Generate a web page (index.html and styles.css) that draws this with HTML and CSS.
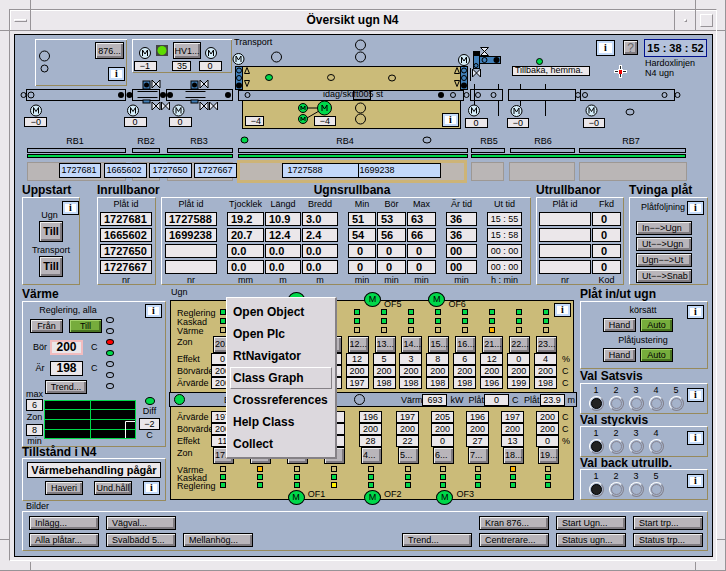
FILE: index.html
```html
<!DOCTYPE html>
<html lang="sv">
<head>
<meta charset="utf-8">
<title>Översikt ugn N4</title>
<link rel="stylesheet" href="styles.css">
</head>
<body>
<div class="window">
<header class="titlebar">
  <button class="frame-btn" aria-label="Fönstermeny"><span class="mark-dash"></span></button>
  <h1>Översikt ugn N4</h1>
  <button class="frame-btn" aria-label="Minimera"><span class="mark-dot"></span></button>
  <button class="frame-btn" aria-label="Maximera"><span class="mark-box"></span></button>
</header>
<main class="screen">

<svg class="mimic" viewBox="15 35 697 148" role="group" aria-label="Transport">
  <defs>
    <g id="motor"><circle r="5.5" class="motor"/><path d="M-2.5 3V-3L0 1L2.5-3V3" class="ln"/></g>
    <g id="valve"><path d="M-4-4L4 4V-4L-4 4Z" class="valve"/></g>
    <g id="stack"><rect width="7" height="23" class="blue"/><circle cx="3.5" cy="4" r="2.5" class="ln"/><circle cx="3.5" cy="11.5" r="2.5" class="ln"/><circle cx="3.5" cy="19" r="3"/></g>
    <g id="gate"><rect x="-3.5" y="-8" width="7" height="8" class="blue"/><circle cy="-4" r="2.5"/><rect x="-3.5" y="11" width="7" height="3" class="blue"/><path d="M-9 2.5H11M-9 8.5H11" class="ln"/></g>
  </defs>
  <g shape-rendering="crispEdges" fill="none">
    <path d="M35.5 86V39.5H127" class="lit"/><path d="M36 85.5H126.5V40" class="dim"/>
    <path d="M132.5 72V39.5H232" class="lit"/><path d="M133 72.5H231.5V40" class="dim"/>
  </g>
  <circle cx="44.5" cy="56" r="5" class="ln"/><circle cx="44.5" cy="68.5" r="3.5" class="ln"/>
  <foreignObject x="95" y="42" width="29" height="17"><button class="btn fill">876...</button></foreignObject>
  <foreignObject x="108" y="67" width="17" height="14"><button class="info fill">i</button></foreignObject>
  <use href="#motor" x="145" y="53"/><use href="#motor" x="211" y="53"/>
  <rect x="156" y="45" width="12" height="11" fill="#444"/><circle cx="162" cy="50.5" r="4.5" fill="#5ddc00"/>
  <foreignObject x="173" y="42" width="28" height="17"><button class="btn fill">HV1...</button></foreignObject>

  <g class="track" shape-rendering="crispEdges">
    <rect x="26.5" y="89.5" width="99" height="11"/><rect x="132.5" y="89.5" width="27" height="11"/><rect x="166.5" y="89.5" width="66" height="11"/>
    <rect x="470.5" y="89.5" width="32" height="11"/><rect x="508.5" y="89.5" width="67" height="11"/><rect x="580.5" y="89.5" width="94" height="11"/>
  </g>
  <use href="#gate" x="146.5" y="89"/><use href="#gate" x="194.5" y="89"/>
  <use href="#valve" x="156" y="84"/><use href="#valve" x="156" y="106"/><use href="#valve" x="165.5" y="106"/>
  <use href="#valve" x="204" y="84"/><use href="#valve" x="204" y="106"/><use href="#valve" x="213.5" y="106"/>
  <circle cx="23.5" cy="95" r="2.5" class="ln"/><circle cx="31" cy="95" r="3" class="ln"/>
  <circle cx="121" cy="95" r="3"/><circle cx="129.5" cy="95" r="3"/><circle cx="163" cy="95" r="3"/><circle cx="170" cy="95" r="3"/><circle cx="228" cy="95" r="3"/>
  <use href="#motor" x="36" y="110.5"/><use href="#motor" x="133" y="110.5"/><use href="#motor" x="178.5" y="110.5"/>

  <text x="234" y="45">Transport</text>
  <circle cx="276.5" cy="57" r="5" class="ln"/><circle cx="360.5" cy="45" r="5" class="ln"/><circle cx="360.5" cy="57" r="5" class="ln"/>
  <g class="kiln" shape-rendering="crispEdges"><rect x="242.5" y="66.5" width="218" height="24"/><rect x="242.5" y="100.5" width="218" height="28"/></g>
  <rect x="238.5" y="90.5" width="225" height="10" class="bar" shape-rendering="crispEdges"/>
  <use href="#stack" x="235.5" y="66.5"/><use href="#stack" x="460.5" y="66.5"/>
  <use href="#motor" x="238.5" y="59"/><use href="#motor" x="464" y="60"/>
  <path d="M244.5 73.5H249.5L247 67.5ZM244.5 80.5H249.5L247 86.5ZM454.5 73.5H459.5L457 67.5ZM454.5 80.5H459.5L457 86.5Z" class="ln"/>
  <ellipse cx="269" cy="77.5" rx="3.5" ry="3" class="on"/><ellipse cx="331" cy="77.5" rx="3.5" ry="3" class="ln"/><ellipse cx="392" cy="78" rx="3.5" ry="3" class="ln"/>
  <rect x="353.5" y="90.5" width="17" height="9" fill="#8e98ae" stroke="#000"/>
  <text x="323" y="97">idag/skift005 st</text>
  <circle cx="247.5" cy="95" r="2.5" class="ln"/><circle cx="441" cy="95" r="3"/><circle cx="453" cy="95" r="2.5" class="ln"/><circle cx="466.5" cy="95" r="2.5" class="ln"/>
  <path d="M307 108H318M307 118L319 111" class="ln"/>
  <circle cx="303" cy="108" r="4.5" class="on"/><circle cx="303" cy="119" r="4.5" class="on"/><circle cx="324.5" cy="108" r="7" class="on"/>
  <path d="M301 110V106L303 109L305 106V110M301 121V117L303 120L305 117V121M322 111V105L324.5 109L327 105V111" class="ln"/>
  <circle cx="360.5" cy="108" r="5" class="ln"/><circle cx="360.5" cy="119" r="5" class="ln"/>
  <foreignObject x="442" y="113" width="17" height="14"><button class="info fill">i</button></foreignObject>

  <rect x="473.5" y="51.5" width="6" height="17" class="blue"/><rect x="479.5" y="56.5" width="21" height="7" class="blue"/><path d="M473 51H480V56H473Z"/>
  <circle cx="484.5" cy="60" r="2.5" class="ln"/><circle cx="496.5" cy="60" r="3"/><circle cx="476" cy="65.5" r="2" class="ln"/>
  <use href="#valve" transform="translate(484.5 51.5) rotate(90)"/><use href="#valve" x="476.5" y="73"/>
  <path d="M470.5 68V81M474.5 84V105M498.5 84V89M498.5 100V116M520.5 84V89M520.5 100V106M545.5 84V89M545.5 100V116" class="ln"/>
  <circle cx="478" cy="95" r="2.5" class="ln"/><circle cx="493.5" cy="95" r="2.5" class="ln"/><circle cx="578" cy="95" r="2.5" class="ln"/><circle cx="585" cy="95" r="2.5" class="ln"/><circle cx="664.5" cy="95" r="2.5" class="ln"/><circle cx="677.5" cy="95" r="2.5" class="ln"/>
  <use href="#motor" x="474" y="110.5"/><use href="#motor" x="516.5" y="111"/><use href="#motor" x="591.5" y="110.5"/>
  <ellipse cx="630" cy="112" rx="4" ry="3" class="ln"/>
  <circle cx="539.5" cy="61.5" r="3" class="on"/>

  <g class="field" shape-rendering="crispEdges">
    <rect x="134.5" y="61.5" width="22" height="9"/><rect x="172.5" y="61.5" width="18" height="9"/><rect x="199.5" y="61.5" width="22" height="9"/>
    <rect x="24.5" y="117.5" width="22" height="9"/><rect x="124.5" y="117.5" width="22" height="9"/><rect x="169.5" y="117.5" width="22" height="9"/>
    <rect x="245.5" y="116.5" width="18" height="9"/><rect x="314.5" y="116.5" width="21" height="9"/>
    <rect x="465.5" y="118.5" width="22" height="9"/><rect x="507.5" y="118.5" width="21" height="9"/><rect x="583.5" y="118.5" width="21" height="9"/>
    <rect x="512.5" y="66.5" width="77" height="9"/>
  </g>
  <g class="mid">
    <text x="145" y="69">−1</text><text x="182" y="69">35</text><text x="210" y="69">0</text>
    <text x="36" y="125">−0</text><text x="135" y="125">0</text><text x="180" y="125">0</text>
    <text x="256" y="124">−4</text><text x="325" y="124">−4</text>
    <text x="476" y="126">0</text><text x="518" y="126">−0</text><text x="594" y="126">−0</text>
    <text x="75" y="144">RB1</text><text x="146" y="144">RB2</text><text x="199" y="144">RB3</text><text x="345" y="144">RB4</text>
    <text x="489" y="144">RB5</text><text x="543" y="144">RB6</text><text x="631" y="144">RB7</text>
    <text x="549" y="73">Tillbaka, hemma.</text>
  </g>

  <foreignObject x="596" y="40" width="19" height="16"><button class="info fill">i</button></foreignObject>
  <foreignObject x="623" y="40" width="15" height="15"><button class="btn fill help">?</button></foreignObject>
  <rect x="644.5" y="39.5" width="62" height="17" fill="#b4c2dc" stroke="#00108c"/>
  <text x="675.5" y="52" class="clock">15 : 38 : 52</text>
  <text x="645" y="66">Hardoxlinjen</text><text x="645" y="76">N4 ugn</text>
  <path d="M620.5 65V78M614 71.5H627" stroke="#fff" stroke-width="3"/><path d="M620.5 66V77M615 71.5H626" stroke="#222"/><rect x="618" y="69" width="5" height="5" fill="#fff"/><rect x="619" y="70" width="3" height="4" fill="#e00"/>

  <ellipse cx="244.5" cy="140" rx="3.5" ry="3" class="on"/><ellipse cx="427" cy="140" rx="4" ry="3" class="ln"/>
  <g class="bar" shape-rendering="crispEdges">
    <rect x="27.5" y="148.5" width="98" height="4"/><rect x="132.5" y="148.5" width="27" height="4"/><rect x="167.5" y="148.5" width="65" height="4"/><rect x="238.5" y="148.5" width="229" height="4"/><rect x="471.5" y="148.5" width="33" height="4"/><rect x="510.5" y="148.5" width="64" height="4"/><rect x="579.5" y="148.5" width="106" height="4"/>
  </g>
  <g class="on" shape-rendering="crispEdges"><rect x="27.5" y="154.5" width="205" height="3"/><rect x="238.5" y="154.5" width="229" height="3"/><rect x="471.5" y="154.5" width="214" height="3"/></g>
  <g class="slot" shape-rendering="crispEdges">
    <rect x="27.5" y="162.5" width="98" height="18"/><rect x="132.5" y="162.5" width="27" height="18"/><rect x="167.5" y="162.5" width="65" height="18"/>
    <rect x="471.5" y="162.5" width="32" height="18"/><rect x="509.5" y="162.5" width="65" height="18"/><rect x="579.5" y="162.5" width="107" height="18"/>
    <rect x="238" y="161" width="227" height="20" class="slot-hot"/>
  </g>
  <g class="plate" shape-rendering="crispEdges"><rect x="59.5" y="163.5" width="41" height="14"/><rect x="104.5" y="163.5" width="42" height="14"/><rect x="149.5" y="163.5" width="42" height="14"/><rect x="194.5" y="163.5" width="42" height="14"/><rect x="282.5" y="163.5" width="76" height="14"/><rect x="358.5" y="163.5" width="82" height="14"/></g>
  <g class="mid"><text x="79" y="173">1727681</text><text x="124" y="173">1665602</text><text x="170" y="173">1727650</text><text x="215" y="173">1727667</text><text x="305" y="173">1727588</text><text x="377" y="173">1699238</text></g>
</svg>

<div class="plates">
  <section class="block"><h2>Uppstart</h2>
    <div class="panel start">
      <button class="info">i</button>
      <span>Ugn</span><button class="btn till">Till</button>
      <span>Transport</span><button class="btn till">Till</button>
    </div>
  </section>
  <section class="block"><h2>Inrullbanor</h2>
    <div class="panel"><table>
      <thead><tr><th>Plåt id</th></tr></thead>
      <tbody><tr><td><b>1727681</b></td></tr><tr><td><b>1665602</b></td></tr><tr><td><b>1727650</b></td></tr><tr><td><b>1727667</b></td></tr></tbody>
      <tfoot><tr><td>nr</td></tr></tfoot>
    </table></div>
  </section>
  <section class="block"><h2 class="center">Ugnsrullbana</h2>
    <div class="panel wide"><table>
      <colgroup><col class="c53"><col class="c47"><col class="c37"><col class="c37"><col class="c38"><col class="c30"><col class="c30"><col class="c41"><col class="c45"></colgroup>
      <thead><tr><th>Plåt id</th><th class="gap">Tjocklek</th><th>Längd</th><th>Bredd</th><th class="gap">Min</th><th>Bör</th><th>Max</th><th class="gap">Är tid</th><th class="gap">Ut tid</th></tr></thead>
      <tbody>
      <tr><td><b>1727588</b></td><td class="gap"><b>19.2</b></td><td><b>10.9</b></td><td><b>3.0</b></td><td class="gap"><b>51</b></td><td><b>53</b></td><td><b>63</b></td><td class="gap"><b>36</b></td><td class="gap"><b class="time">15 : 55</b></td></tr>
      <tr><td><b>1699238</b></td><td class="gap"><b>20.7</b></td><td><b>12.4</b></td><td><b>2.4</b></td><td class="gap"><b>54</b></td><td><b>56</b></td><td><b>66</b></td><td class="gap"><b>36</b></td><td class="gap"><b class="time">15 : 58</b></td></tr>
      <tr><td><b></b></td><td class="gap"><b>0.0</b></td><td><b>0.0</b></td><td><b>0.0</b></td><td class="gap"><b class="one">0</b></td><td><b class="one">0</b></td><td><b class="one">0</b></td><td class="gap"><b>00</b></td><td class="gap"><b class="time">00 : 00</b></td></tr>
      <tr><td><b></b></td><td class="gap"><b>0.0</b></td><td><b>0.0</b></td><td><b>0.0</b></td><td class="gap"><b class="one">0</b></td><td><b class="one">0</b></td><td><b class="one">0</b></td><td class="gap"><b>00</b></td><td class="gap"><b class="time">00 : 00</b></td></tr>
      </tbody>
      <tfoot><tr><td>nr</td><td class="gap">mm</td><td>m</td><td>m</td><td class="gap">min</td><td>min</td><td>min</td><td class="gap">min</td><td class="gap">h : min</td></tr></tfoot>
    </table></div>
  </section>
  <section class="block"><h2>Utrullbanor</h2>
    <div class="panel"><table>
      <colgroup><col class="c53"><col class="c30"></colgroup>
      <thead><tr><th>Plåt id</th><th>Fkd</th></tr></thead>
      <tbody><tr><td><b></b></td><td><b class="one">0</b></td></tr><tr><td><b></b></td><td><b class="one">0</b></td></tr><tr><td><b></b></td><td><b class="one">0</b></td></tr><tr><td><b></b></td><td><b class="one">0</b></td></tr></tbody>
      <tfoot><tr><td>nr</td><td>Kod</td></tr></tfoot>
    </table></div>
  </section>
  <section class="block"><h2>Tvinga plåt</h2>
    <div class="panel force">
      <div class="force-head"><span>Plåtföljning</span><button class="info">i</button></div>
      <button class="btn">In−−&gt;Ugn</button><button class="btn">Ut−−&gt;Ugn</button><button class="btn">Ugn−−&gt;Ut</button><button class="btn">Ut−−&gt;Snab</button>
    </div>
  </section>
</div>

<div class="middle">
  <div class="col">
    <h2>Värme</h2>
    <section class="panel heat">
      <div class="heat-top">
        <div class="heat-set">
          <span class="line">Reglering, alla</span>
          <div class="pair"><button class="btn">Från</button><button class="btn green">Till</button></div>
          <div class="setrow"><label for="bor">Bör</label><input id="bor" class="big hot" value="200"><span>C</span></div>
          <div class="setrow"><label for="ar">Är</label><input id="ar" class="big" value="198" readonly><span>C</span></div>
          <button class="btn trend">Trend...</button>
        </div>
        <div class="lamps"><i class="lamp"></i><i class="lamp"></i><i class="lamp red"></i><i class="lamp green"></i><i class="lamp"></i><i class="lamp"></i><i class="lamp"></i></div>
        <button class="info">i</button>
      </div>
      <div class="heat-graph">
        <div class="zones"><label for="zmax">max</label><input id="zmax" value="6"><span>Zon</span><input id="zmin" value="8"><label for="zmin">min</label></div>
        <svg class="graph" viewBox="0 0 92 39" preserveAspectRatio="none"><rect width="92" height="39"/><path d="M0 .5H92M0 9.5H92M0 19.5H92M0 29.5H92M0 38.5H92M.5 0V39M46.5 0V39M91.5 0V39" stroke="#00d84a"/><path d="M81.5 38V21.5H91" stroke="#fff" fill="none"/></svg>
        <div class="diff"><i class="lamp wide-lamp green"></i><label for="diff">Diff</label><input id="diff" value="−2" readonly><span>C</span></div>
      </div>
    </section>
    <h2 class="low">Tillstånd i N4</h2>
    <section class="panel state">
      <output class="status">Värmebehandling pågår</output>
      <div class="state-row"><button class="btn">Haveri</button><button class="btn">Und.håll</button><button class="info">i</button></div>
    </section>
  </div>

  <section class="furnace">
    <span class="furnace-name">Ugn</span>
    <div class="tan">
      <button class="info">i</button>
      <div class="fans top"><span class="fan f1"></span><span class="fan f2">M</span><em class="o2">OF5</em><span class="fan f3">M</span><em class="o3">OF6</em></div>
      <div class="zonegrid" id="upper">
        <div class="names"><span class="r-led">Reglering</span><span class="r-led">Kaskad</span><span class="r-led">Värme</span><span class="r-btn">Zon</span><span class="r-val">Effekt</span><span class="r-val">Börvärde</span><span class="r-val">Ärvärde</span></div>
        <div class="zones-row"></div>
        <div class="units"><span class="r-val">%</span><span class="r-val">C</span><span class="r-val">C</span></div>
      </div>
      <div class="midbar">
        <i class="dot green"></i><span class="m-b">B</span><i class="dot m-dot"></i>
        <label for="eff">Värm</label><input id="eff" value="693" readonly><span class="m-kw">kW</span>
        <label for="pt">Plåt</label><input id="pt" value="0" readonly><span class="m-c">C</span>
        <label for="pp">Plåt</label><input id="pp" value="23.9" readonly><span>m</span>
      </div>
      <div class="zonegrid" id="lower">
        <div class="names"><span class="r-val">Ärvärde</span><span class="r-val">Börvärde</span><span class="r-val">Effekt</span><span class="r-btn">Zon</span><span class="r-led">Värme</span><span class="r-led">Kaskad</span><span class="r-led">Reglering</span></div>
        <div class="zones-row"></div>
        <div class="units"><span class="r-val">C</span><span class="r-val">C</span><span class="r-val">%</span></div>
      </div>
      <div class="fans bottom"><span class="fan f1">M</span><em class="o1">OF1</em><span class="fan f2">M</span><em class="o2">OF2</em><span class="fan f3">M</span><em class="o3">OF3</em></div>
    </div>
    <div class="menu" role="menu">
      <button role="menuitem">Open Object</button><button role="menuitem">Open Plc</button><button role="menuitem">RtNavigator</button><button role="menuitem" class="active">Class Graph</button><button role="menuitem">Crossreferences</button><button role="menuitem">Help Class</button><button role="menuitem">Collect</button>
    </div>
  </section>

  <div class="col">
    <h2>Plåt in/ut ugn</h2>
    <section class="panel modes">
      <div class="modes-list">
        <span>körsätt</span><div class="pair"><button class="btn">Hand</button><button class="btn green">Auto</button></div>
        <span>Plåtjustering</span><div class="pair"><button class="btn">Hand</button><button class="btn green">Auto</button></div>
      </div>
      <button class="info">i</button>
    </section>
    <h2>Val Satsvis</h2>
    <section class="panel choice">
      <label>1<input type="radio" name="sats" checked></label><label>2<input type="radio" name="sats"></label><label>3<input type="radio" name="sats"></label><label>4<input type="radio" name="sats"></label><label>5<input type="radio" name="sats"></label>
      <button class="info">i</button>
    </section>
    <h2 class="tight">Val styckvis</h2>
    <section class="panel choice">
      <label>1<input type="radio" name="styck" checked></label><label>2<input type="radio" name="styck"></label><label>3<input type="radio" name="styck"></label><label>4<input type="radio" name="styck"></label>
      <button class="info">i</button>
    </section>
    <h2 class="tight">Val back utrullb.</h2>
    <section class="panel choice">
      <label>1<input type="radio" name="back" checked></label><label>2<input type="radio" name="back"></label><label>3<input type="radio" name="back"></label><label>5<input type="radio" name="back"></label>
      <button class="info">i</button>
    </section>
  </div>
</div>

<nav class="pictures">
  <span class="pictures-name">Bilder</span>
  <div class="panel picture-grid">
    <button class="btn">Inlägg...</button><button class="btn">Vägval...</button><button class="btn g-kran">Kran 876...</button><button class="btn">Start Ugn...</button><button class="btn">Start trp...</button>
    <button class="btn g-first">Alla plåtar...</button><button class="btn">Svalbädd 5...</button><button class="btn">Mellanhög...</button><button class="btn g-trend">Trend...</button><button class="btn">Centrerare...</button><button class="btn">Status ugn...</button><button class="btn">Status trp...</button>
  </div>
</nav>
</main>
</div>
<script src="zones.js"></script>
</body>
</html>
```
FILE: zones.js
```js
// Each zone: button text, effect, set value, actual value, lamps (g green, o orange, y yellow, - off)
const upper = [
  ["20...", 0, 200, 200, "gg-"], ["", "", "", "", "gg-"], ["", "", "", "", "gg-"], ["", "", "", "", "gg-"],
  ["", "", "", "", "gg-"], ["12...", 12, 200, 197, "gg-"], ["13...", 5, 200, 198, "gg-"], ["14...", 3, 200, 198, "gg-"],
  ["15...", 8, 200, 198, "gg-"], ["16...", 6, 200, 198, "gg-"], ["21...", 12, 200, 196, "ggo"], ["22...", 0, 200, 199, "gg-"], ["23...", 4, 200, 198, "gg-"]
];
const lower = [
  ["17...", 11, 200, 197, "-gg"], ["", "", "", "", "ogg"], ["", "", "", "", "-gg"], ["", "", "", "", "-gy"], ["4...", 28, 200, 196, "-gg"],
  ["5...", 22, 200, 197, "-gg"], ["6...", 0, 200, 205, "-gg"], ["7...", 27, 200, 196, "-gg"], ["18...", 13, 200, 197, "ogg"], ["19...", 0, 200, 200, "-gg"]
];
const names = { g: "green", o: "orange", y: "yellow", "-": "off" };
const leds = s => [...s].map(c => `<span class="r-led"><i class="led ${names[c]}"></i></span>`).join("");
const val = v => `<output class="r-val val">${v}</output>`;
const btn = t => `<button class="btn r-btn">${t}</button>`;

document.querySelector("#upper .zones-row").innerHTML = upper
  .map(([n, e, b, a, l]) => `<div class="zone">${leds(l)}${btn(n)}${val(e)}${val(b)}${val(a)}</div>`).join("");
document.querySelector("#lower .zones-row").innerHTML = lower
  .map(([n, e, b, a, l]) => `<div class="zone">${val(a)}${val(b)}${val(e)}${btn(n)}${leds(l)}</div>`).join("");
```
FILE: styles.css
```css
:root {
  --bg: #a5b3cb;
  --tan: #cbbb79;
  --paper: #ebe7ea;
  --green: #00d84a;
  --grey: #b9b5ba;
  --edge: #979397;
}
* { box-sizing: border-box; }
body {
  margin: 0;
  padding: 9px;
  padding-bottom: 10px;
  font: 9px/10px "Liberation Sans", sans-serif;
  color: #000;
  background:
    linear-gradient(var(--edge), var(--edge)) 30px 0 / 1px 9px no-repeat,
    linear-gradient(var(--edge), var(--edge)) 0 30px / 9px 1px no-repeat,
    linear-gradient(var(--edge), var(--edge)) 0 539px / 9px 1px no-repeat,
    linear-gradient(var(--edge), var(--edge)) 30px 100% / 1px 9px no-repeat,
    linear-gradient(var(--edge), var(--edge)) calc(100% - 30px) 0 / 1px 9px no-repeat,
    linear-gradient(var(--edge), var(--edge)) calc(100% - 30px) 100% / 1px 9px no-repeat,
    linear-gradient(var(--edge), var(--edge)) 100% 30px / 9px 1px no-repeat,
    linear-gradient(var(--edge), var(--edge)) 100% 539px / 9px 1px no-repeat,
    linear-gradient(var(--edge), var(--edge)) 0 100% / 100% 1px no-repeat,
    linear-gradient(var(--edge), var(--edge)) 100% 0 / 1px 100% no-repeat,
    #ebe8ec;
}
button, input { font: inherit; color: inherit; margin: 0; padding: 0; border-radius: 0; }
h1, h2 { margin: 0; }
i, em { font-style: normal; }

.window { border: 1px solid var(--edge); border-right-color: #fff; border-bottom-color: #fff; padding: 0 3px 3px 4px; }
.titlebar { display: flex; height: 21px; margin: 0 -3px 3px -4px; border-bottom: 1px solid var(--edge); box-shadow: inset 1px 1px #fff; }
.titlebar h1 { flex: 1; font: bold 12px/20px "Liberation Sans", sans-serif; text-align: center; }
.frame-btn { width: 21px; display: grid; place-items: center; background: none; border: 0; border-right: 1px solid var(--edge); }
h1 ~ .frame-btn { border-right: 0; border-left: 1px solid var(--edge); }
.mark-dash { width: 13px; height: 3px; border: 1px solid var(--edge); border-top-color: #fff; border-left-color: #fff; }
.mark-dot { width: 3px; height: 3px; border: 1px solid var(--edge); border-top-color: #fff; border-left-color: #fff; }
.mark-box { width: 13px; height: 13px; border: 1px solid var(--edge); border-top-color: #fff; border-left-color: #fff; }

.screen { border: 1px solid #000; background: var(--bg); padding-bottom: 5px; }

/* transport diagram */
.mimic { display: block; width: 100%; }
.ln { fill: none; stroke: #000; }
.motor { fill: #d4ecf8; stroke: #000; }
.valve { fill: #e6eaf4; stroke: #000; }
.blue { fill: #4280ba; stroke: #000; }
.lit { stroke: #fff; }
.dim { stroke: #978a5c; }
.track { fill: var(--bg); stroke: #000; }
.bar { fill: #9fadc6; stroke: #000; }
.kiln { fill: var(--tan); stroke: #000; }
.on { fill: var(--green); stroke: #000; }
.field { fill: var(--paper); stroke: #000; }
.slot { fill: #bab6b6; stroke: #9d9894; }
.slot-hot { fill: #bdb7b2; stroke: #cdb477; stroke-width: 3px; }
.plate { fill: #c3d8fa; stroke: #000; }
.mid { text-anchor: middle; }
.clock { font-size: 11px; font-weight: bold; text-anchor: middle; }
.fill { display: block; width: 100%; height: 100%; }

/* shared parts */
.panel { border: 1px solid #fff; border-right-color: #978a5c; border-bottom-color: #978a5c; }
h2 { font-size: 12px; line-height: 14px; white-space: nowrap; }
.btn {
  height: 14px;
  padding: 0 2px;
  line-height: 10px;
  border: 1px solid #000;
  background: var(--grey);
  box-shadow: inset 1px 1px #eee, inset -2px -2px #7f7b80;
  white-space: nowrap;
  overflow: hidden;
}
.btn.fill { height: 100%; padding: 0; }
.btn.green { background: #76ac3c; box-shadow: inset 1px 1px #a5d46c, inset -2px -2px #4a7422; }
.btn.help { font-size: 12px; color: #666; }
.info {
  width: 17px;
  height: 14px;
  border: 1px solid #000;
  background: #fff;
  box-shadow: inset 0 0 0 2px #c6dcfa;
  font: bold 10px/10px "Liberation Serif", serif;
}
.info.fill { width: 100%; height: 100%; }
.lamp { width: 8px; height: 6px; border: 1px solid #000; border-radius: 50%; }
.lamp.wide-lamp { width: 10px; height: 8px; }
.lamp.green, .dot.green { background: var(--green); }
.lamp.red { background: #f00; }
input:not([type="radio"]) { border: 1px solid #000; background: var(--paper); height: 12px; text-align: center; min-width: 0; }
.pair { display: flex; gap: 4px; }
.pair .btn { width: 33px; }

/* plate tables */
.plates { display: grid; grid-template-columns: 70px 59px 1fr 88px 79px; gap: 5px; padding: 0 4px 2px 7px; }
.block { display: flex; flex-direction: column; min-width: 0; }
.block .panel { height: 88px; padding: 0 2px; }
.block .panel.wide { padding: 0 7px 0 3px; }
.center { text-align: center; padding-left: 12px; }
table { width: 100%; table-layout: fixed; border-collapse: collapse; }
th, td { padding: 0 1px 2px 0; font-weight: normal; text-align: center; }
th { height: 14px; white-space: nowrap; }
tfoot td { padding-bottom: 0; line-height: 9px; }
td b { display: block; height: 14px; padding-left: 3px; border: 1px solid #000; background: var(--paper); font-size: 11px; line-height: 12px; text-align: left; }
td b.one { padding-left: 8px; }
td b.time { padding: 0; font-size: 9px; font-weight: normal; text-align: center; }
.gap { padding-left: 9px; }
.c53 { width: 53px; } .c47 { width: 47px; } .c45 { width: 45px; } .c41 { width: 41px; }
.c38 { width: 38px; } .c37 { width: 37px; } .c30 { width: 30px; }

.block .start { width: 58px; display: flex; flex-direction: column; align-items: center; padding: 3px 0 5px; }
.start .info { align-self: flex-end; margin-bottom: -6px; }
.start span { line-height: 12px; }
.start > span:first-of-type { margin-right: 3px; }
.till { width: 24px; height: 22px; font-size: 11px; font-weight: bold; margin-bottom: 2px; }
.block .force { display: flex; flex-direction: column; gap: 2px; padding: 3px 3px 1px 6px; }
.force-head { display: flex; justify-content: flex-end; gap: 2px; height: 18px; line-height: 12px; }
.force .btn { width: 56px; text-align: left; padding-left: 5px; }

/* middle */
.middle { display: grid; grid-template-columns: 144px 1fr 128px; gap: 3px; padding: 0 4px 0 7px; }
.col { display: flex; flex-direction: column; min-width: 0; }
.heat { height: 146px; padding: 2px 3px; }
.heat-top { display: flex; align-items: flex-start; height: 90px; }
.heat-top > .info { margin-left: auto; }
.heat-set { width: 76px; margin-left: 4px; display: flex; flex-direction: column; }
.line { height: 15px; line-height: 13px; text-align: center; }
.heat-set .pair { gap: 6px; margin-bottom: 5px; }
.setrow { display: flex; align-items: center; height: 18px; margin-bottom: 3px; }
.setrow label { width: 20px; text-align: center; }
.setrow .big { width: 33px; height: 15px; margin-right: 8px; font-size: 12px; font-weight: bold; }
.setrow .hot { border: 2px solid #f2bcbf; }
.trend { width: 42px; margin-left: 15px; flex: none; }
.lamps { display: flex; flex-direction: column; gap: 5px; padding-top: 13px; }
.heat-graph { display: flex; gap: 1px; align-items: flex-start; }
.zones { width: 17px; margin-top: -5px; display: flex; flex-direction: column; }
.zones > * { width: 17px; text-align: center; }
.zones label { line-height: 10px; }
.zones span { line-height: 13px; height: 13px; }
.graph { flex: 1; height: 39px; margin-top: 6px; min-width: 0; }
.diff { width: 25px; display: flex; flex-direction: column; align-items: center; padding-top: 3px; }
.diff label { line-height: 13px; }
.diff input { width: 21px; }
h2.low { line-height: 11px; }
.state { height: 43px; padding: 3px 4px; }
.status { display: block; height: 16px; border: 1px solid #000; background: var(--paper); font-size: 11px; font-weight: bold; line-height: 14px; text-align: center; white-space: nowrap; }
.state-row { display: flex; gap: 11px; margin: 3px 0 0 18px; }
.state-row .btn { width: 38px; padding: 0; }

.furnace { position: relative; min-width: 0; }
.furnace-name { display: block; height: 13px; padding-left: 2px; }
.tan { position: relative; margin: 0 3px 0 1px; border: 1px solid #000; background: var(--tan); padding: 8px 0 9px; }
.tan > .info { position: absolute; top: 2px; right: 2px; }
.zonegrid { display: grid; grid-template-columns: 34px 1fr 12px; padding-left: 6px; }
.names, .units, .zone { display: flex; flex-direction: column; min-width: 0; }
.names span { white-space: nowrap; }
.units span { padding-left: 1px; }
#upper .units { padding-top: 44px; }
.zones-row { display: grid; grid-template-columns: repeat(13, 1fr); }
#lower .zones-row { grid-template-columns: repeat(5, 37fr) repeat(4, 35fr) 25fr; }
.zone > * { width: 23px; }
.r-led { height: 9px; line-height: 9px; }
#lower .r-led { height: 8px; line-height: 8px; }
#lower .r-btn { margin-bottom: 2px; }
.led { display: block; width: 6px; height: 6px; margin: 0 auto; border: 1px solid #000; }
.led.green { background: var(--green); } .led.orange { background: #ffb400; } .led.yellow { background: #fff200; }
.r-btn { height: 17px; line-height: 13px; flex: none; }
.zone .r-btn { width: 21px; margin-left: 2px; text-align: left; padding: 0 1px; }
.r-val { height: 12px; line-height: 12px; }
.val { border: 1px solid #000; background: var(--paper); line-height: 10px; text-align: center; }
.midbar { display: flex; align-items: center; height: 15px; margin: 3px -4px 3px -2px; padding: 0 1px 0 4px; border: 1px solid #000; background: #9fadc6; }
#lower { padding-top: 1px; }
.dot { width: 11px; height: 11px; border: 1px solid #000; border-radius: 50%; }
.m-b { margin-left: 39px; }
.m-dot { margin-left: auto; margin-right: 36px; }
.midbar input { width: 25px; margin-right: 3px; }
.m-kw { width: 18px; }
.m-c { width: 12px; }

.fans { position: absolute; left: 0; width: 100%; height: 0; }
.fans.top { top: -2px; }
.fans.bottom { bottom: 2px; }
.fan, .fans em { position: absolute; }
.fan { width: 17px; height: 15px; margin: -7px 0 0 -8px; border: 1px solid #000; border-radius: 50%; background: var(--green); line-height: 13px; text-align: center; }
.f1 { left: 31%; } .f2 { left: 50%; } .f3 { left: 66%; }
.o1 { left: 34%; } .o2 { left: 53%; } .o3 { left: 69%; }
.bottom .o1, .bottom .o2, .bottom .o3 { top: -8px; }
.bottom .f3 { left: 68%; }
.bottom .o3 { left: 71%; }

.menu { position: absolute; left: 57px; top: 10px; width: 111px; padding: 3px 3px 2px; background: #dcd8dd; border: 1px solid #fff; border-right: 2px solid #858186; border-bottom: 2px solid #858186; display: flex; flex-direction: column; }
.menu button { height: 22px; padding: 0 2px; border: 1px solid transparent; background: none; font-size: 12px; font-weight: bold; line-height: 18px; text-align: left; white-space: nowrap; }
.menu .active { border-color: #fff #858186 #858186 #fff; }

.modes { display: flex; align-items: flex-start; height: 68px; padding: 3px 3px 2px 22px; }
.modes-list { flex: 1; }
.modes-list span { display: block; width: 80px; height: 13px; line-height: 11px; text-align: center; }
.modes-list .pair { margin-bottom: 3px; }
.choice { display: flex; height: 31px; padding: 2px 3px 0 5px; }
.choice label { width: 20px; display: flex; flex-direction: column; align-items: center; line-height: 8px; }
.choice .info { margin: 2px 0 0 auto; }
.choice input { appearance: none; width: 15px; height: 15px; margin-top: 2px; border: 1px solid #fff; border-right-color: #83818c; border-bottom-color: #83818c; border-radius: 50%; display: grid; place-items: center; }
.choice input::before { content: ""; width: 9px; height: 9px; border: 1px solid #878592; border-radius: 50%; }
.choice input:checked::before { background: #222; border-color: #000; }
h2.tight { line-height: 12px; }

.pictures { padding: 0 4px 0 7px; }
.pictures-name { display: block; padding-left: 4px; line-height: 10px; }
.picture-grid { display: grid; grid-template-columns: repeat(3, 70px) 1fr repeat(4, 70px); gap: 3px 7px; padding: 4px 4px 3px 6px; }
.picture-grid .btn { text-align: left; padding-left: 5px; }
.g-kran { grid-column: 6; }
.g-first { grid-column: 1; }
.g-trend { grid-column: 5; }
```
